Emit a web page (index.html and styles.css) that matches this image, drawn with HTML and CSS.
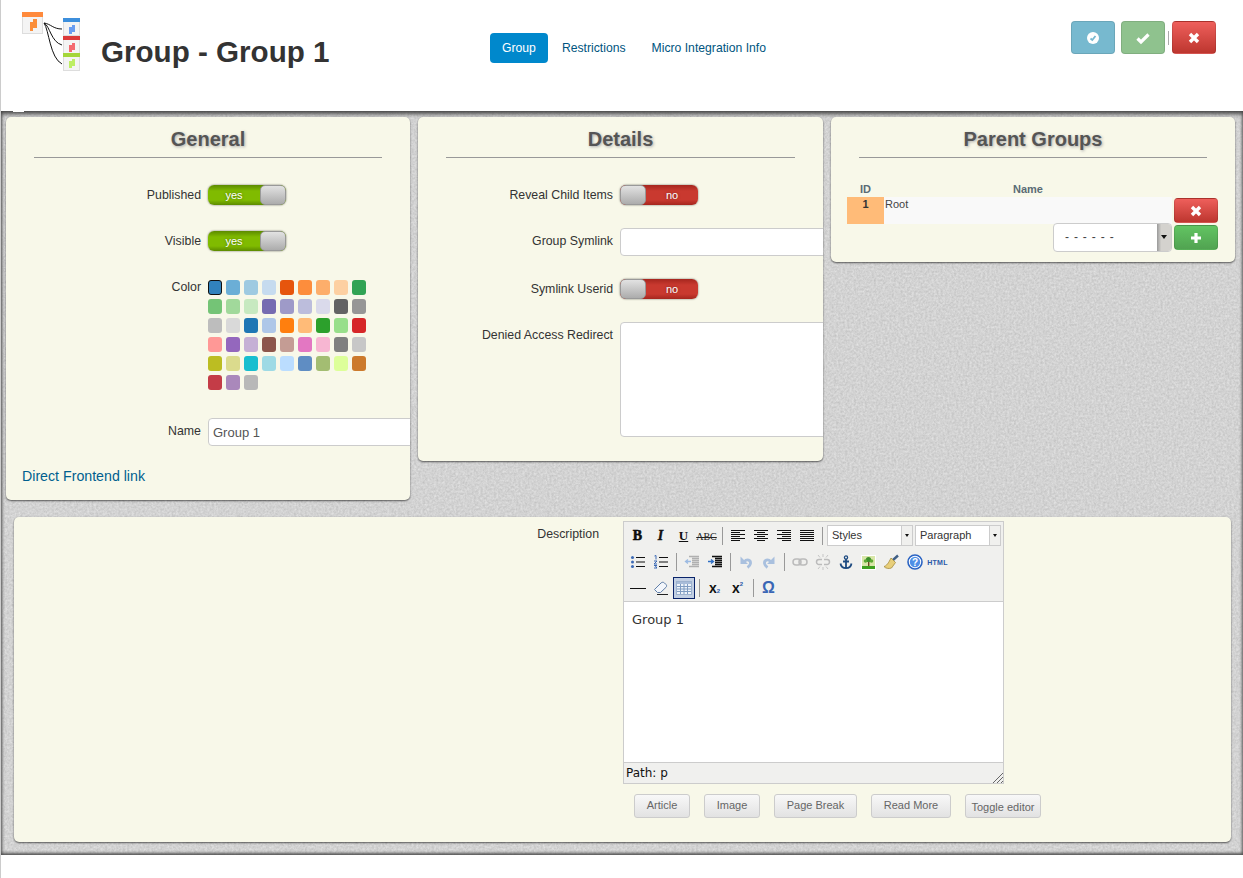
FILE: index.html
```html
<!DOCTYPE html>
<html>
    <head>
        <meta name="viewport" content="width=device-width, initial-scale=1.0">
        <link rel="stylesheet" href="styles.css">
    </head>
    <body>
        <div class="page">
            <header class="top">
                <svg class="logo" width="60" height="60" viewBox="0 0 60 60">
                    <rect x="0.5" y="0.5" width="20" height="21" fill="#f4f4f4" stroke="#ddd"/>
                    <rect x="0" y="0" width="21" height="5" fill="#ff8a3c"/>
                    <path d="M8 19V10H11V19ZM11 16V7H15V16Z" fill="#fb8e3a"/>
                    <rect x="41.5" y="6.5" width="16" height="17" fill="#f4f4f4" stroke="#ddd"/>
                    <rect x="41" y="6" width="17" height="4" fill="#3d8fdc"/>
                    <path d="M47 22V15H50V22ZM50 20V13H53V20Z" fill="#6a9df0"/>
                    <rect x="41.5" y="24.5" width="16" height="17" fill="#f4f4f4" stroke="#ddd"/>
                    <rect x="41" y="24" width="17" height="4" fill="#dc3a3a"/>
                    <path d="M47 40V33H50V40ZM50 38V31H53V38Z" fill="#f46a70"/>
                    <rect x="41.5" y="41.5" width="16" height="17" fill="#f4f4f4" stroke="#ddd"/>
                    <rect x="41" y="41" width="17" height="4" fill="#a4d63a"/>
                    <path d="M47 56V49H50V56ZM50 54V47H53V54Z" fill="#bdee64"/>
                    <path d="M22 11C29 12 31 17 40 17M22 11C28 14 29 30 40 33M22 11C27 18 28 46 40 52" fill="none" stroke="#111" stroke-width="1"/>
                </svg>
                <h1 class="title">Group - Group 1</h1>
                <ul class="tabs">
                    <li class="tab active">Group</li>
                    <li class="tab">Restrictions</li>
                    <li class="tab">Micro Integration Info</li>
                </ul>
                <div class="actions">
                    <button class="btn btn-info">
                        <svg width="14" height="14" viewBox="0 0 14 14"><circle cx="7" cy="7" r="6" fill="#fff"/><path d="M4.5 7.5L6.3 9L9.5 5" fill="none" stroke="#76b8cf" stroke-width="1.8"/></svg>
                    </button>
                    <button class="btn btn-ok">
                        <svg width="14" height="14" viewBox="0 0 14 14"><path d="M1.5 7.5L5 11L12.5 3.5" fill="none" stroke="#fff" stroke-width="3.2"/></svg>
                    </button>
                    <span class="action-sep"></span>
                    <button class="btn btn-del">
                        <svg width="12" height="12" viewBox="0 0 12 12"><path d="M2 2L10 10M10 2L2 10" fill="none" stroke="#fff" stroke-width="3.4"/></svg>
                    </button>
                </div>
                <span class="notch"></span>
            </header>

            <main class="content">
                <svg class="paper" width="100%" height="100%">
                    <filter id="grain" color-interpolation-filters="sRGB">
                        <feTurbulence type="fractalNoise" baseFrequency="0.45" numOctaves="3" seed="4"/>
                        <feColorMatrix values="0.16 0 0 0 0.745  0.16 0 0 0 0.745  0.16 0 0 0 0.745  0 0 0 0 1"/>
                    </filter>
                    <rect width="100%" height="100%" filter="url(#grain)"/>
                </svg>

                <div class="panels">
                    <section class="panel panel-general">
                        <h2 class="panel-title">General</h2>
                        <div class="row row-first">
                            <label class="lbl">Published</label>
                            <div class="toggle on"><span class="toggle-text">yes</span><span class="knob"></span></div>
                        </div>
                        <div class="row">
                            <label class="lbl">Visible</label>
                            <div class="toggle on"><span class="toggle-text">yes</span><span class="knob"></span></div>
                        </div>
                        <div class="row row-color">
                            <label class="lbl">Color</label>
                            <div class="swatches">
                                <i class="sel" style="background:#3182bd"></i><i style="background:#6baed6"></i><i style="background:#9ecae1"></i><i style="background:#c6dbef"></i><i style="background:#e6550d"></i><i style="background:#fd8d3c"></i><i style="background:#fdae6b"></i><i style="background:#fdd0a2"></i><i style="background:#31a354"></i>
                                <i style="background:#74c476"></i><i style="background:#a1d99b"></i><i style="background:#c7e9c0"></i><i style="background:#756bb1"></i><i style="background:#9e9ac8"></i><i style="background:#bcbddc"></i><i style="background:#dadaeb"></i><i style="background:#636363"></i><i style="background:#969696"></i>
                                <i style="background:#bdbdbd"></i><i style="background:#d9d9d9"></i><i style="background:#1f77b4"></i><i style="background:#aec7e8"></i><i style="background:#ff7f0e"></i><i style="background:#ffbb78"></i><i style="background:#2ca02c"></i><i style="background:#98df8a"></i><i style="background:#d62728"></i>
                                <i style="background:#ff9896"></i><i style="background:#9467bd"></i><i style="background:#c5b0d5"></i><i style="background:#8c564b"></i><i style="background:#c49c94"></i><i style="background:#e377c2"></i><i style="background:#f7b6d2"></i><i style="background:#7f7f7f"></i><i style="background:#c7c7c7"></i>
                                <i style="background:#bcbd22"></i><i style="background:#dbdb8d"></i><i style="background:#17becf"></i><i style="background:#9edae5"></i><i style="background:#bbddff"></i><i style="background:#5f8dc3"></i><i style="background:#a3bd72"></i><i style="background:#ddff99"></i><i style="background:#cc7a2c"></i>
                                <i style="background:#c43c47"></i><i style="background:#aa88bb"></i><i style="background:#b8b8b8"></i>
                            </div>
                        </div>
                        <div class="row row-name">
                            <label class="lbl">Name</label>
                            <input class="field" type="text" value="Group 1">
                        </div>
                        <a class="front-link">Direct Frontend link</a>
                    </section>

                    <section class="panel panel-details">
                        <h2 class="panel-title">Details</h2>
                        <div class="row row-first">
                            <label class="lbl">Reveal Child Items</label>
                            <div class="toggle off"><span class="knob"></span><span class="toggle-text">no</span></div>
                        </div>
                        <div class="row row-symlink">
                            <label class="lbl">Group Symlink</label>
                            <input class="field" type="text">
                        </div>
                        <div class="row row-userid">
                            <label class="lbl">Symlink Userid</label>
                            <div class="toggle off"><span class="knob"></span><span class="toggle-text">no</span></div>
                        </div>
                        <div class="row row-denied">
                            <label class="lbl">Denied Access Redirect</label>
                            <div class="field area"></div>
                        </div>
                    </section>

                    <section class="panel panel-parents">
                        <h2 class="panel-title">Parent Groups</h2>
                        <div class="pg-head"><span class="pg-id">ID</span><span class="pg-name">Name</span></div>
                        <div class="pg-row">
                            <div class="pg-cell-id">1</div>
                            <div class="pg-cell-name">Root</div>
                            <button class="btn btn-del btn-small">
                                <svg width="12" height="12" viewBox="0 0 12 12"><path d="M2 2L10 10M10 2L2 10" fill="none" stroke="#fff" stroke-width="3.4"/></svg>
                            </button>
                        </div>
                        <div class="pg-add">
                            <div class="pg-select"><span>- - - - - -</span><b class="pg-arrow"></b></div>
                            <button class="btn btn-add">
                                <svg width="12" height="12" viewBox="0 0 12 12"><path d="M6 1V11M1 6H11" fill="none" stroke="#fff" stroke-width="3.2"/></svg>
                            </button>
                        </div>
                    </section>
                </div>

                <section class="panel panel-desc">
                    <label class="lbl desc-lbl">Description</label>
                    <div class="desc-col">
                        <div class="editor">
                            <div class="toolbar">
                                <div class="tool-row">
                                    <span class="tool t-b">B</span>
                                    <span class="tool t-i">I</span>
                                    <span class="tool t-u">U</span>
                                    <span class="tool t-abc">ABC</span>
                                    <span class="tsep"></span>
                                    <span class="tool"><svg width="16" height="14" viewBox="0 0 16 14"><path d="M1 1.5H15M1 3.5H10M1 5.5H15M1 7.5H10M1 9.5H15M1 11.5H10" stroke="#111" fill="none"/></svg></span>
                                    <span class="tool"><svg width="16" height="14" viewBox="0 0 16 14"><path d="M1 1.5H15M4 3.5H12M1 5.5H15M4 7.5H12M1 9.5H15M4 11.5H12" stroke="#111" fill="none"/></svg></span>
                                    <span class="tool"><svg width="16" height="14" viewBox="0 0 16 14"><path d="M1 1.5H15M6 3.5H15M1 5.5H15M6 7.5H15M1 9.5H15M6 11.5H15" stroke="#111" fill="none"/></svg></span>
                                    <span class="tool"><svg width="16" height="14" viewBox="0 0 16 14"><path d="M1 1.5H15M1 3.5H15M1 5.5H15M1 7.5H15M1 9.5H15M1 11.5H15" stroke="#111" fill="none"/></svg></span>
                                    <span class="tsep"></span>
                                    <span class="tsel tsel-styles"><span>Styles</span><b></b></span>
                                    <span class="tsel tsel-para"><span>Paragraph</span><b></b></span>
                                </div>
                                <div class="tool-row">
                                    <span class="tool"><svg width="16" height="14" viewBox="0 0 16 14"><path d="M6 2.5H15M6 7H15M6 11.5H15" stroke="#111" fill="none"/><circle cx="2.5" cy="2.5" r="1.5" fill="#3d6ab5"/><circle cx="2.5" cy="7" r="1.5" fill="#3d6ab5"/><circle cx="2.5" cy="11.5" r="1.5" fill="#3d6ab5"/></svg></span>
                                    <span class="tool"><svg width="16" height="14" viewBox="0 0 16 14"><path d="M6 2.5H15M6 7H15M6 11.5H15" stroke="#111" fill="none"/><path d="M1.5 1L3 .5V4.5M1 6H4L1 9H4M1 10.5H4L2.5 11.5L4 13H1" stroke="#3d6ab5" fill="none"/></svg></span>
                                    <span class="tsep"></span>
                                    <span class="tool"><svg width="16" height="14" viewBox="0 0 16 14"><path d="M5 1.5H15M8 3.5H15M8 5.5H15M8 7.5H15M8 9.5H15M5 11.5H15" stroke="#b0b0b0" stroke-width="1.3" fill="none"/><path d="M7 6.5H2M4 4.5L1.5 6.5L4 8.5" stroke="#9dbbe2" stroke-width="1.3" fill="none"/></svg></span>
                                    <span class="tool"><svg width="16" height="14" viewBox="0 0 16 14"><path d="M5 1.5H15M8 3.5H15M8 5.5H15M8 7.5H15M8 9.5H15M5 11.5H15" stroke="#111" stroke-width="1.3" fill="none"/><path d="M1 6.5H6M4 4.5L6.5 6.5L4 8.5" stroke="#2f6fc4" stroke-width="1.3" fill="none"/></svg></span>
                                    <span class="tsep"></span>
                                    <span class="tool"><svg width="14" height="14" viewBox="0 0 14 14"><path d="M5.5 6.5C8 3.5 12 5 11.5 8.5C11.2 10.5 10 11.5 8.5 12.5" stroke="#a9c0de" stroke-width="2.8" fill="none"/><path d="M1.5 1.5V9H9Z" fill="#a9c0de"/></svg></span>
                                    <span class="tool"><svg width="14" height="14" viewBox="0 0 14 14"><path d="M8.5 6.5C6 3.5 2 5 2.5 8.5C2.8 10.5 4 11.5 5.5 12.5" stroke="#a9c0de" stroke-width="2.8" fill="none"/><path d="M12.5 1.5V9H5Z" fill="#a9c0de"/></svg></span>
                                    <span class="tsep"></span>
                                    <span class="tool"><svg width="16" height="12" viewBox="0 0 16 12"><rect x="1" y="3" width="8" height="6" rx="3" fill="none" stroke="#bbb" stroke-width="1.5"/><rect x="7" y="3" width="8" height="6" rx="3" fill="none" stroke="#bbb" stroke-width="1.5"/></svg></span>
                                    <span class="tool"><svg width="16" height="16" viewBox="0 0 16 16"><path d="M7 5.5H4A2.5 2.5 0 0 0 4 10.5H7M9 5.5H12A2.5 2.5 0 0 1 12 10.5H9" fill="none" stroke="#bbb" stroke-width="1.5"/><path d="M8 0V3M8 13V16M3 1L5 3.5M13 1L11 3.5M3 15L5 12.5M13 15L11 12.5" stroke="#c5c5c5"/></svg></span>
                                    <span class="tool"><svg width="14" height="15" viewBox="0 0 14 15"><circle cx="7" cy="2.5" r="1.6" fill="none" stroke="#1d4a80" stroke-width="1.3"/><path d="M7 4V13M4 6.5H10M1.5 8.5C2 11.5 4.5 13.2 7 13.2C9.5 13.2 12 11.5 12.5 8.5" fill="none" stroke="#1d4a80" stroke-width="1.8"/></svg></span>
                                    <span class="tool"><svg width="15" height="15" viewBox="0 0 15 15"><rect width="15" height="15" fill="#fff"/><rect x="1" y="1" width="13" height="10" fill="#d8e6a8"/><rect x="1" y="11" width="13" height="3" fill="#3fa020"/><circle cx="7.5" cy="4.5" r="2.6" fill="#3c8f2a"/><circle cx="4.5" cy="6" r="1.8" fill="#5eaa35"/><circle cx="10.5" cy="6" r="1.8" fill="#5eaa35"/><rect x="7" y="7" width="1.4" height="4" fill="#6b4a20"/></svg></span>
                                    <span class="tool"><svg width="17" height="16" viewBox="0 0 17 16"><path d="M10 6L15 1.5" stroke="#3f5f85" stroke-width="2.4"/><path d="M8 4L12.5 8.5L8.5 14C6 15 2.5 14.5 1 12.5C3.5 12 5.5 9 8 4Z" fill="#e8cf7a" stroke="#a58c3d" stroke-width=".8"/></svg></span>
                                    <span class="tool"><svg width="16" height="16" viewBox="0 0 16 16"><circle cx="8" cy="8" r="7" fill="#fff" stroke="#2a63c2" stroke-width="1.6"/><circle cx="8" cy="8" r="5.2" fill="#4f8fe6"/><text class="help-q" x="8" y="11.5" text-anchor="middle">?</text></svg></span>
                                    <span class="tool t-html">HTML</span>
                                </div>
                                <div class="tool-row">
                                    <span class="tool"><svg width="16" height="3" viewBox="0 0 16 3"><path d="M0 1.5H16" stroke="#111"/></svg></span>
                                    <span class="tool"><svg width="16" height="14" viewBox="0 0 16 14"><path d="M1.5 8.5L8 2C9 1 10.5 1 11.5 2L13 3.5C13.8 4.3 13.8 5.5 13 6.3L7.5 11.5H4.5Z" fill="#f3f6fb" stroke="#5f7ea8"/><path d="M4 13.5H15" stroke="#222"/></svg></span>
                                    <span class="tool tool-on"><svg width="16" height="14" viewBox="0 0 16 14"><rect x=".5" y=".5" width="15" height="13" fill="#eef3fa" stroke="#9db2cf"/><rect x="1" y="1" width="14" height="2" fill="#a8bcd9"/><path d="M1 5.5H15M1 8H15M1 10.5H15M4.5 3V13M8 3V13M11.5 3V13" stroke="#7f9cc2"/></svg></span>
                                    <span class="tsep"></span>
                                    <span class="tool t-x"><span>x</span><sub>2</sub></span>
                                    <span class="tool t-x"><span>x</span><sup>2</sup></span>
                                    <span class="tsep"></span>
                                    <span class="tool t-omega">Ω</span>
                                </div>
                            </div>
                            <div class="edit-area">Group 1</div>
                            <div class="statusbar">
                                <span>Path: p</span>
                                <svg class="grip" width="11" height="11" viewBox="0 0 11 11"><path d="M1 11L11 1M5 11L11 5M9 11L11 9" stroke="#666" fill="none"/></svg>
                            </div>
                        </div>
                        <div class="ed-buttons">
                            <a class="ed-btn btn-article">Article</a>
                            <a class="ed-btn btn-image">Image</a>
                            <a class="ed-btn btn-break">Page Break</a>
                            <a class="ed-btn btn-more">Read More</a>
                            <a class="ed-btn btn-toggle">Toggle editor</a>
                        </div>
                    </div>
                </section>
            </main>
            <footer class="bottom"></footer>
        </div>
    </body>
</html>
```

FILE: styles.css
```css
* {
    box-sizing: border-box;
}
html, body {
    margin: 0;
    padding: 0;
    background: #fff;
}
body {
    font-family: "Liberation Sans", Arial, sans-serif;
    font-size: 12px;
    color: #333;
}
.page {
    width: 1243px;
    height: 878px;
    overflow: hidden;
    border-left: 1px solid #ccc;
    display: flex;
    flex-direction: column;
}

/* header */
.top {
    height: 111px;
    flex: none;
    position: relative;
    z-index: 2;
    display: flex;
    align-items: flex-start;
    padding-left: 21px;
}
.logo {
    margin-top: 12px;
    flex: none;
}
.title {
    margin: 35px 0 0 19px;
    width: 389px;
    font-size: 29.6px;
    line-height: 34px;
    font-weight: bold;
    color: #333;
}
.tabs {
    list-style: none;
    margin: 33px 0 0 0;
    padding: 0;
    display: flex;
    gap: 2px;
    font-size: 12.2px;
}
.tab {
    height: 30px;
    line-height: 30px;
    padding: 0 12px;
    border-radius: 4px;
    color: #005580;
}
.tab.active {
    background: #0088cc;
    color: #fff;
}
.actions {
    margin: 21px 27px 0 auto;
    display: flex;
    align-items: flex-start;
    gap: 6px;
}
.action-sep {
    width: 1px;
    height: 14px;
    margin: 10px -3px 0 -3px;
    background: #aaa;
}
.notch {
    position: absolute;
    left: 12px;
    bottom: -1px;
    width: 11px;
    height: 2px;
    background: #fff;
}
.btn {
    width: 44px;
    height: 33px;
    padding: 0;
    border: 1px solid rgba(0, 0, 0, 0.1);
    border-radius: 4px;
    display: flex;
    align-items: center;
    justify-content: center;
}
.btn-info {
    background: #77b9cf;
}
.btn-ok {
    background: #8fc28e;
}
.btn-del {
    background: linear-gradient(#ee5f5b, #bd362f);
}
.btn-add {
    background: linear-gradient(#62c462, #51a351);
}
.btn-small {
    height: 25px;
    flex: none;
    margin: 1px 0 0 2px;
}

/* content */
.content {
    height: 744px;
    flex: none;
    position: relative;
    padding: 6px 0 0 5px;
    background: #d2d2d2;
}
.content::after {
    content: "";
    position: absolute;
    inset: 0;
    box-shadow: inset 0 4px 4px -1px #444, inset 0 -3px 3px -1px #555, inset 3px 0 3px -2px #777, inset -3px 0 3px -2px #888;
    pointer-events: none;
}
.paper {
    position: absolute;
    left: 0;
    top: 0;
}
.panels {
    position: relative;
    z-index: 1;
    display: grid;
    grid-template-columns: 404px 405px 404px;
    gap: 8px;
    align-items: start;
}
.panel {
    background: #f8f8e9;
    border-radius: 5px;
    box-shadow: 0 1px 2px rgba(0, 0, 0, 0.6);
    overflow: hidden;
}
.panel-title {
    margin: 11px 28px 0;
    height: 30px;
    border-bottom: 1px solid #999;
    text-align: center;
    font-size: 20px;
    line-height: 22px;
    font-weight: bold;
    color: #555;
    text-shadow: 1px 1px 3px #aaa;
}
.panel-general {
    height: 383px;
}
.panel-details {
    height: 344px;
}
.panel-parents {
    height: 145px;
}

/* form rows */
.row {
    display: flex;
    align-items: flex-start;
    gap: 7px;
    margin-top: 26px;
}
.row-first {
    margin-top: 27px;
}
.lbl {
    width: 195px;
    flex: none;
    text-align: right;
    font-size: 12.35px;
    line-height: 20px;
    color: #333;
}
.toggle {
    width: 78px;
    height: 20px;
    flex: none;
    border-radius: 6px;
    display: flex;
    overflow: hidden;
    color: #fff;
    font-size: 11px;
    line-height: 20px;
    box-shadow: 0 0 2px rgba(0, 0, 0, 0.6);
}
.toggle-text {
    flex: 1;
    text-align: center;
    text-shadow: 0 0 3px rgba(0, 0, 0, 0.4);
}
.toggle.on {
    background: linear-gradient(#5c8a00, #80bb00 30%, #80bb00 75%, #5c8a00);
}
.toggle.off {
    background: linear-gradient(#a5261e, #c9392f 30%, #c9392f 75%, #a5261e);
}
.knob {
    width: 26px;
    flex: none;
    border: 1px solid #999;
    border-radius: 5px;
    background: linear-gradient(#e2e2e2, #acacac);
}
.row-color {
    margin-top: 29px;
}
.row-color .lbl {
    line-height: 14px;
}
.swatches {
    width: 165px;
    display: grid;
    grid-template-columns: repeat(9, 14px);
    grid-auto-rows: 15px;
    gap: 4px;
}
.swatches i {
    display: block;
    border-radius: 3px;
}
.swatches .sel {
    border: 1px solid #111;
}
.row-name {
    margin-top: 28px;
    align-items: center;
}
.row-name .lbl {
    margin-top: -3px;
}
.field {
    width: 240px;
    height: 28px;
    flex: none;
    padding: 0 4px;
    border: 1px solid #ccc;
    border-radius: 4px;
    background: #fff;
    font-family: "Liberation Sans", Arial, sans-serif;
    font-size: 13px;
    color: #555;
}
.area {
    height: 115px;
}
.front-link {
    display: block;
    margin: 21px 0 0 16px;
    font-size: 14.2px;
    line-height: 18px;
    color: #005f8f;
}
.row-symlink {
    margin-top: 23px;
}
.row-symlink .lbl {
    margin-top: 3px;
}
.row-userid {
    margin-top: 23px;
}
.row-denied {
    margin-top: 23px;
}
.row-denied .lbl {
    margin-top: 3px;
}

/* parent groups */
.pg-head {
    display: flex;
    margin: 24px 0 0 16px;
    height: 15px;
    font-size: 11px;
    line-height: 14px;
    font-weight: bold;
    color: #5a6b75;
}
.pg-id {
    width: 37px;
    text-align: center;
}
.pg-name {
    width: 288px;
    text-align: center;
}
.pg-row {
    display: flex;
    margin-left: 16px;
    height: 27px;
}
.pg-cell-id {
    width: 37px;
    background: #ffbb78;
    text-align: center;
    font-size: 11px;
    line-height: 14px;
    font-weight: bold;
}
.pg-cell-name {
    width: 288px;
    padding-left: 1px;
    background: #f9f9f9;
    font-size: 11px;
    line-height: 14px;
    color: #444;
}
.pg-add {
    display: flex;
    justify-content: flex-end;
    gap: 2px;
    width: 387px;
    margin-top: -1px;
}
.pg-select {
    width: 119px;
    height: 29px;
    border: 1px solid #ccc;
    border-radius: 4px;
    background: #fff;
    display: flex;
    justify-content: space-between;
    padding-left: 11px;
    font-size: 12px;
    letter-spacing: 0.8px;
    line-height: 27px;
    color: #444;
    overflow: hidden;
}
.pg-arrow {
    width: 14px;
    background: linear-gradient(90deg, #999, #d4d2ce 30%);
    position: relative;
}
.pg-arrow::after {
    content: "";
    position: absolute;
    left: 4px;
    top: 11px;
    border: 3px solid transparent;
    border-top: 4px solid #111;
}
.btn-add {
    height: 25px;
    margin-top: 2px;
}

/* description + editor */
.panel-desc {
    position: relative;
    z-index: 1;
    width: 1217px;
    height: 325px;
    margin: 17px 0 0 8px;
    display: flex;
    align-items: flex-start;
}
.desc-lbl {
    width: 585px;
    margin-top: 7px;
}
.desc-col {
    margin: 4px 0 0 24px;
}
.editor {
    width: 381px;
    height: 263px;
    border: 1px solid #ccc;
    display: flex;
    flex-direction: column;
}
.toolbar {
    height: 80px;
    flex: none;
    padding: 1px 0 0 2px;
    background: #f0f0ee;
    border-bottom: 1px solid #ccc;
}
.tool-row {
    display: flex;
    align-items: center;
    height: 26px;
}
.tool {
    width: 23px;
    height: 22px;
    flex: none;
    display: flex;
    align-items: center;
    justify-content: center;
    color: #111;
}
.tool-on {
    background: #c2cfe3;
    border: 1px solid #0a246a;
    width: 22px;
    margin-left: 1px;
}
.tsep {
    width: 8px;
    height: 20px;
    flex: none;
    background: linear-gradient(#999, #999) center / 1px 18px no-repeat;
}
.t-b, .t-i, .t-u {
    font-family: "Liberation Serif", serif;
    font-size: 14px;
    font-weight: bold;
}
.t-b {
    -webkit-text-stroke: 0.5px #000;
}
.t-i {
    font-style: italic;
    -webkit-text-stroke: 0.4px #111;
}
.t-u {
    text-decoration: underline;
    font-size: 13px;
}
.t-abc {
    font-family: "Liberation Serif", serif;
    font-size: 10px;
    color: #222;
    text-decoration: line-through;
}
.t-html {
    font-size: 7px;
    font-weight: bold;
    letter-spacing: 0.3px;
    color: #2a58a8;
}
.t-x {
    font-size: 14px;
    font-weight: bold;
}
.t-x sub, .t-x sup {
    font-size: 6px;
    line-height: 7px;
    vertical-align: baseline;
    color: #2a58a8;
}
.t-x sub {
    align-self: flex-end;
    margin-bottom: 4px;
}
.t-x sup {
    align-self: flex-start;
    margin-top: 4px;
}
.t-omega {
    font-size: 16px;
    font-weight: bold;
    color: #3a66b5;
}
.help-q {
    font-family: "Liberation Sans", sans-serif;
    font-size: 10px;
    font-weight: bold;
    fill: #fff;
}
.tsel {
    height: 21px;
    margin-bottom: 1px;
    flex: none;
    display: flex;
    justify-content: space-between;
    border: 1px solid #ccc;
    background: #fff;
    font-size: 11px;
    line-height: 19px;
    padding-left: 4px;
}
.tsel b {
    width: 11px;
    border-left: 1px solid #ccc;
    background: #f0f0ee;
    position: relative;
}
.tsel b::after {
    content: "";
    position: absolute;
    left: 3px;
    top: 8px;
    border: 2.5px solid transparent;
    border-top: 3px solid #111;
}
.tsel-styles {
    width: 86px;
    margin-left: 1px;
}
.tsel-para {
    width: 86px;
    margin-left: 2px;
}
.edit-area {
    flex: 1;
    background: #fff;
    padding: 9px 8px;
    font-family: "DejaVu Sans", sans-serif;
    font-size: 13px;
    line-height: 18px;
    color: #333;
}
.statusbar {
    height: 21px;
    flex: none;
    position: relative;
    padding-left: 2px;
    background: #f0f0ee;
    border-top: 1px solid #ccc;
    font-family: "DejaVu Sans", sans-serif;
    font-size: 12px;
    line-height: 20px;
    color: #111;
}
.grip {
    position: absolute;
    right: 0;
    bottom: 0;
}
.ed-buttons {
    display: flex;
    margin: 10px 0 0 11px;
}
.ed-btn {
    height: 24px;
    flex: none;
    margin-right: 14px;
    border: 1px solid #ccc;
    border-radius: 3px;
    background: linear-gradient(#f8f8f8, #e2e2e2);
    text-align: center;
    font-size: 11px;
    line-height: 20px;
    color: #666;
}
.btn-article, .btn-image {
    width: 56px;
}
.btn-break {
    width: 83px;
}
.btn-more {
    width: 80px;
}
.btn-toggle {
    width: 76px;
    line-height: 24px;
    margin-right: 0;
}
.bottom {
    flex: 1;
    background: #fff;
}
```
